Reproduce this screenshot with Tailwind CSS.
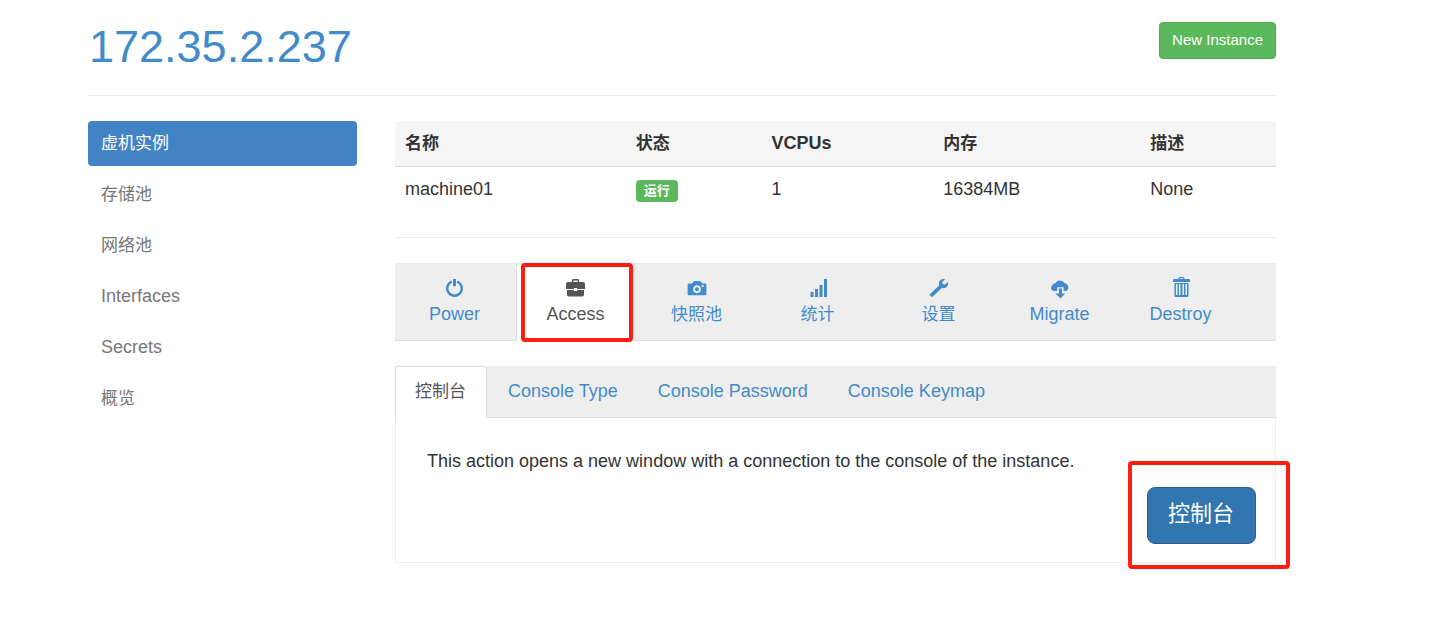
<!DOCTYPE html>
<html lang="zh-CN">
<head>
<meta charset="utf-8">
<meta name="viewport" content="width=device-width, initial-scale=1">
<title>172.35.2.237 - machine01</title>
<script src="https://cdn.jsdelivr.net/npm/@tailwindcss/browser@4"></script>
</head>
<body class="bg-white font-['Liberation_Sans','Noto_Sans_CJK_SC',sans-serif] text-[17px] leading-[25px] text-[#333]">
<div class="pl-[88px] pr-[155px] pb-16">
  <header class="flex items-start justify-between border-b border-[#eee] pt-[22px] pb-6">
    <h1 class="pl-[1px] text-[45px] leading-[49px] text-[#428bca]"><a href="#">172.35.2.237</a></h1>
    <button type="button" class="rounded-[4px] border border-[#4cae4c] bg-[#5cb85c] px-3 pt-1 pb-1.5 text-[15px] leading-[25px] text-white">New Instance</button>
  </header>

  <div class="flex gap-[38px] pt-[25px]">
    <nav class="flex w-[269px] shrink-0 flex-col gap-[6px] text-[#777]">
      <a href="#" class="rounded-[4px] bg-[#4183c4] px-[13px] py-[10px] text-white">虚机实例</a>
      <a href="#" class="px-[13px] py-[10px]">存储池</a>
      <a href="#" class="px-[13px] py-[10px]">网络池</a>
      <a href="#" class="px-[13px] py-[10px] text-[18px]">Interfaces</a>
      <a href="#" class="px-[13px] py-[10px] text-[18px]">Secrets</a>
      <a href="#" class="px-[13px] py-[10px]">概览</a>
    </nav>

    <main class="min-w-0 flex-1">
      <table class="w-full table-fixed text-left">
        <colgroup><col class="w-[26.2%]"><col class="w-[15.4%]"><col class="w-[19.5%]"><col class="w-[23.5%]"><col></colgroup>
        <thead class="border-b border-[#ddd] bg-[#f5f5f5]">
          <tr>
            <th class="px-[10px] py-[10px]">名称</th>
            <th class="px-[10px] py-[10px]">状态</th>
            <th class="px-[10px] py-[10px] text-[18px]">VCPUs</th>
            <th class="px-[10px] py-[10px]">内存</th>
            <th class="px-[10px] py-[10px]">描述</th>
          </tr>
        </thead>
        <tbody>
          <tr class="align-top text-[18px]">
            <td class="px-[10px] py-[10px]">machine01</td>
            <td class="px-[10px] pt-[13px]"><span class="block w-fit rounded-[4px] bg-[#5cb85c] px-2 text-[13px] leading-[22px] font-bold text-white">运行</span></td>
            <td class="px-[10px] py-[10px]">1</td>
            <td class="px-[10px] py-[10px]">16384MB</td>
            <td class="px-[10px] py-[10px]">None</td>
          </tr>
        </tbody>
      </table>

      <hr class="mt-[25px] border-[#eee]">

      <nav class="mt-[25px] flex gap-[2px] border-b border-[#ddd] bg-[#eee] text-[#428bca]">
        <a href="#" class="flex w-[119px] flex-col items-center pt-[13px] pb-[13px] text-[18px]">
          <svg class="mt-[3px] mb-1 h-[19px] w-5" viewBox="0 0 20 19" fill="none" stroke="currentColor"><path d="M6.900 2.600a7.300 7.300 0 1 0 5.200 0" stroke-width="2.400"/><path d="M9.500 0v7.200" stroke-width="3"/></svg>
          Power</a>
        <a href="#" aria-current="page" class="relative -mb-px flex w-[119px] flex-col items-center rounded-t-[4px] border-x border-t border-[#ddd] bg-white pt-3 pb-[14px] text-[18px] text-[#555]">
          <svg class="mt-[3px] mb-1 h-[19px] w-5" viewBox="0 0 20 19" fill="currentColor"><path d="M6 3V1.200Q6 0 7.200 0h4.600Q13 0 13 1.200V3H17q2 0 2 2v5H11V9H8v1H0V5Q0 3 2 3zM7.500 3h4V1.500h-4zM1 11H8v1h3v-1h7v4.500q0 2-2 2H3q-2 0-2-2z"/></svg>
          Access
          <span class="pointer-events-none absolute top-[-1px] left-[4px] h-[79px] w-[112px] rounded-[4px] border-4 border-[#ff1c10]"></span></a>
        <a href="#" class="flex w-[119px] flex-col items-center pt-[13px] pb-[13px]">
          <svg class="mt-[3px] mb-1 h-[19px] w-5" viewBox="0 0 20 19" fill="currentColor" fill-rule="evenodd"><path d="M2 4.500h3l1.500-2Q6.900 2 7.600 2h5.200q.7 0 1.100.5l1.500 2H18q1.400 0 1.400 1.400v9q0 1.400-1.400 1.400H2Q.6 16.300.6 14.900v-9Q.6 4.500 2 4.500zM10 6.300a4 4 0 1 0 .01 0zM10 8.300a2 2 0 1 1-.01 0zM14.800 6.200h1.900v1.900h-1.900z"/></svg>
          快照池</a>
        <a href="#" class="flex w-[119px] flex-col items-center pt-[13px] pb-[13px]">
          <svg class="mt-[3px] mb-1 h-[19px] w-5" viewBox="0 0 20 19" fill="currentColor"><path d="M2.500 13h3v5h-3zM7 10h3v8H7zM11.500 6h3v12h-3zM16 0h3v18h-3z"/></svg>
          统计</a>
        <a href="#" class="flex w-[119px] flex-col items-center pt-[13px] pb-[13px]">
          <svg class="mt-[3px] mb-1 h-[19px] w-5" viewBox="0 0 20 19" fill="currentColor"><path d="M16.200.4Q13.300-.7 11.200 1.300C9.700 2.800 9.600 4.500 10.100 6.400L1.100 14.900Q.3 15.700 1.100 16.500l1.100 1.100q.8.8 1.600 0l9-8.700c2 .5 3.600.2 5-1.200q2-2 1.100-4.700L16 5.500 13.600 5 13.200 3z"/></svg>
          设置</a>
        <a href="#" class="flex w-[119px] flex-col items-center pt-[13px] pb-[13px] text-[18px]">
          <svg class="mt-[3px] mb-1 h-[19px] w-5 overflow-visible" viewBox="0 0 20 19" fill="currentColor"><path d="M3.800 12A3.400 3.400 0 0 1 2.500 5.900 2.800 2.800 0 0 1 5.300 4.300 5.200 5.200 0 0 1 14.600 4.200 4.200 4.200 0 0 1 16.200 12H13.600V8.200H7.200V12zM8.900 9.500h3v5h3.400L10.400 19.400 5.500 14.500h3.400z"/></svg>
          Migrate</a>
        <a href="#" class="flex w-[119px] flex-col items-center pt-[11px] pb-[13px] text-[18px]">
          <svg class="mt-[3px] mb-1 h-[21px] w-5" viewBox="0 0 20 21" fill="currentColor" fill-rule="evenodd"><path d="M7.500 2V1.500Q7.500 0 9 0h3q1.500 0 1.500 1.500V2h4.500q1 0 1 1v2H2V3q0-1 1-1zM9 2h3V1.200H9zM3.500 6h14v12.500q0 1.500-1.500 1.500H5q-1.500 0-1.500-1.500zM5 7v11h1.500V7zM8 7v11h1.500V7zM11.500 7v11H13V7zM14.500 7v11H16V7z"/></svg>
          Destroy</a>
      </nav>

      <section class="mt-[25px]">
        <nav class="flex gap-[2px] border-b border-[#ddd] bg-[#eee] text-[18px] text-[#428bca]">
          <a href="#" aria-current="page" class="-mb-px rounded-t-[4px] border-x border-t border-[#ddd] bg-white pr-5 pl-[19px] pt-3 pb-[14px] text-[17px] text-[#555]">控制台</a>
          <a href="#" class="px-[19px] pt-[13px] pb-[13px]">Console Type</a>
          <a href="#" class="px-[19px] pt-[13px] pb-[13px]">Console Password</a>
          <a href="#" class="px-[19px] pt-[13px] pb-[13px]">Console Keymap</a>
        </nav>
        <div class="flex flex-col border-x border-b border-[#eee] px-[19px] pt-[31px] pb-[18px]">
          <p class="px-3 text-[18px]">This action opens a new window with a connection to the console of the instance.</p>
          <div class="relative mt-[13px] self-end">
            <button type="button" class="rounded-[8px] border border-[#285e8e] bg-[#3276b1] pr-[21px] pl-5 pt-[11px] pb-[14px] text-[22px] leading-[30px] text-white">控制台</button>
            <span class="pointer-events-none absolute top-[-26px] left-[-19px] h-[108px] w-[162px] rounded-[4px] border-4 border-[#ff1c10]"></span>
          </div>
        </div>
      </section>
    </main>
  </div>
</div>
</body>
</html>
